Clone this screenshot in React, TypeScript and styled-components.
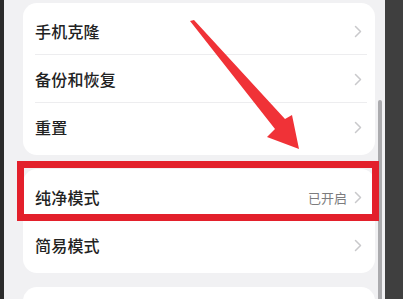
import styled, { createGlobalStyle } from "styled-components";

const GlobalStyle = createGlobalStyle`
  html, body {
    margin: 0;
    padding: 0;
    background: #3f3f3f;
  }
  body {
    font-family: "Noto Sans CJK SC", "Noto Sans", sans-serif;
  }
`;

interface Item {
  label: string;
  value?: string;
}

const groupOne: Item[] = [
  { label: "手机克隆" },
  { label: "备份和恢复" },
  { label: "重置" },
];

const groupTwo: Item[] = [
  { label: "纯净模式", value: "已开启" },
  { label: "简易模式" },
];

const Chevron = () => (
  <svg width="8" height="13" viewBox="0 0 8 13" fill="none">
    <path d="M1.5 1.5 L6.5 6.5 L1.5 11.5" stroke="#c9c9cb" strokeWidth="1.5" strokeLinecap="round" strokeLinejoin="round" />
  </svg>
);

// red annotation arrow drawn over the list
const Arrow = () => (
  <ArrowSvg width="403" height="299" viewBox="0 0 403 299">
    <path
      d="M190 21 L194 20 L285 119 L292 115 L299 149 L267 137 L275 129 Z"
      fill="#f03237"
    />
  </ArrowSvg>
);

const SettingsGroup = ({ items }: { items: Item[] }) => (
  <Card>
    {items.map((item, i) => (
      <Row key={item.label} $last={i === items.length - 1}>
        <Label>{item.label}</Label>
        <Right>
          {item.value && <Value>{item.value}</Value>}
          <Chevron />
        </Right>
      </Row>
    ))}
  </Card>
);

export default function App() {
  return (
    <>
      <GlobalStyle />
      <Screen>
        <LeftEdge />
        <Main>
          <SettingsGroup items={groupOne} />
          <SettingsGroup items={groupTwo} />
          <Card $tail />
          <Scrollbar />
          <Highlight />
          <Arrow />
        </Main>
        <RightEdge />
      </Screen>
    </>
  );
}

const Screen = styled.div`
  display: flex;
  width: 403px;
  height: 299px;
  overflow: hidden;
`;

const LeftEdge = styled.div`
  width: 4px;
  flex-shrink: 0;
  background: #2b2b2b;
`;

const RightEdge = styled.div`
  width: 18px;
  flex-shrink: 0;
  background: #3f3f3f;
`;

const Main = styled.div`
  position: relative;
  flex: 1;
  display: flex;
  flex-direction: column;
  gap: 14px;
  padding: 3px 10px 0 19px;
  background: #f1f1f3;
  overflow: hidden;
`;

const Card = styled.div<{ $tail?: boolean }>`
  flex-shrink: 0;
  background: #ffffff;
  border-radius: 14px;
  padding: 4px 0;
  height: ${(p) => (p.$tail ? "40px" : "auto")};
`;

const Row = styled.div<{ $last: boolean }>`
  position: relative;
  display: flex;
  align-items: center;
  justify-content: space-between;
  height: 48px;
  padding: 0 13px 0 12px;

  &::after {
    content: "";
    display: ${(p) => (p.$last ? "none" : "block")};
    position: absolute;
    left: 12px;
    right: 8px;
    bottom: 0;
    height: 1px;
    background: #ededef;
  }
`;

const Label = styled.span`
  font-size: 16px;
  font-weight: 500;
  color: #222222;
  letter-spacing: 0.2px;
`;

const Right = styled.div`
  display: flex;
  align-items: center;
  gap: 7px;
`;

const Value = styled.span`
  font-size: 13px;
  color: #7c7c7e;
`;

const Scrollbar = styled.div`
  position: absolute;
  left: 374px;
  top: 100px;
  width: 4px;
  height: 210px;
  border-radius: 2px;
  background: #ababae;
`;

const Highlight = styled.div`
  position: absolute;
  left: 13px;
  top: 161px;
  width: 362px;
  height: 60px;
  box-sizing: border-box;
  border: 7px solid #e3202b;
`;

const ArrowSvg = styled.svg`
  position: absolute;
  left: -4px;
  top: 0;
  pointer-events: none;
`;
